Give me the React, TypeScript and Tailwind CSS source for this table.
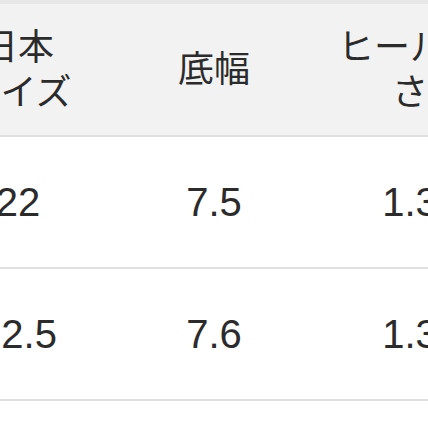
const ROWS = [
  { size: '22', width: '7.5', heel: '1.3' },
  { size: '22.5', width: '7.6', heel: '1.3' },
  { size: '23', width: '7.8', heel: '1.3' },
];

export default function App() {
  return (
    <div className="w-[428px] h-[428px] overflow-hidden bg-white">
      <div className="h-[4px] bg-[#e7e7e7]" />
      <table
        className="ml-[-80px] w-[588px] table-fixed border-collapse text-[#2b2b2b]"
        style={{ fontFamily: '"Liberation Sans", "Noto Sans CJK JP", sans-serif' }}
      >
        <thead>
          <tr className="h-[132px] bg-[#f2f2f2] border-b-2 border-[#e0e0e0]">
            <th className="w-[196px] p-0 text-center text-[36px] font-normal leading-[45px]">
              日本
              <br />
              サイズ
            </th>
            <th className="w-[196px] p-0 text-center text-[36px] font-normal leading-[45px]">
              底幅
            </th>
            <th className="w-[196px] p-0 text-center text-[36px] font-normal leading-[45px]">
              ヒール高
              <br />
              さ
            </th>
          </tr>
        </thead>
        <tbody>
          {ROWS.map((row) => (
            <tr key={row.size} className="h-[132px] border-b-2 border-[#e0e0e0]">
              <td className="p-0 text-center text-[40px] leading-none">{row.size}</td>
              <td className="p-0 text-center text-[40px] leading-none">{row.width}</td>
              <td className="p-0 text-center text-[40px] leading-none">{row.heel}</td>
            </tr>
          ))}
        </tbody>
      </table>
    </div>
  );
}
